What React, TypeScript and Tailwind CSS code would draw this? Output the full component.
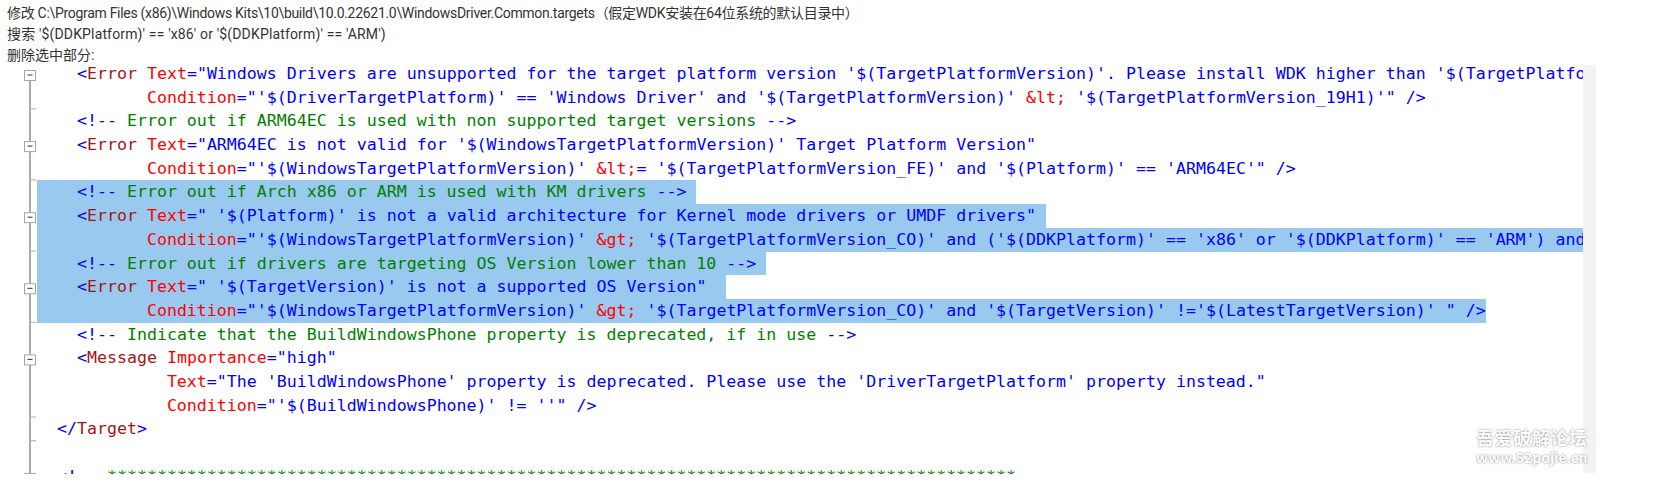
type Seg = [string, string];

const BLUE = 'text-[#0000ff]';
const MAROON = 'text-[#a31515]';
const RED = 'text-[#ff0000]';
const GREEN = 'text-[#008000]';

const sp = (n: number) => ' '.repeat(n);

const lines: string[] = [
  sp(4) + `<Error Text="Windows Drivers are unsupported for the target platform version '$(TargetPlatformVersion)'. Please install WDK higher than '$(TargetPlatformVersion_19H1)'."`,
  sp(11) + `Condition="'$(DriverTargetPlatform)' == 'Windows Driver' and '$(TargetPlatformVersion)' &lt; '$(TargetPlatformVersion_19H1)'" />`,
  sp(4) + `<!-- Error out if ARM64EC is used with non supported target versions -->`,
  sp(4) + `<Error Text="ARM64EC is not valid for '$(WindowsTargetPlatformVersion)' Target Platform Version"`,
  sp(11) + `Condition="'$(WindowsTargetPlatformVersion)' &lt;= '$(TargetPlatformVersion_FE)' and '$(Platform)' == 'ARM64EC'" />`,
  sp(4) + `<!-- Error out if Arch x86 or ARM is used with KM drivers -->`,
  sp(4) + `<Error Text=" '$(Platform)' is not a valid architecture for Kernel mode drivers or UMDF drivers"`,
  sp(11) + `Condition="'$(WindowsTargetPlatformVersion)' &gt; '$(TargetPlatformVersion_CO)' and ('$(DDKPlatform)' == 'x86' or '$(DDKPlatform)' == 'ARM') and '$(DriverType)' != ''" />`,
  sp(4) + `<!-- Error out if drivers are targeting OS Version lower than 10 -->`,
  sp(4) + `<Error Text=" '$(TargetVersion)' is not a supported OS Version" `,
  sp(11) + `Condition="'$(WindowsTargetPlatformVersion)' &gt; '$(TargetPlatformVersion_CO)' and '$(TargetVersion)' !='$(LatestTargetVersion)' " />`,
  sp(4) + `<!-- Indicate that the BuildWindowsPhone property is deprecated, if in use -->`,
  sp(4) + `<Message Importance="high"`,
  sp(13) + `Text="The 'BuildWindowsPhone' property is deprecated. Please use the 'DriverTargetPlatform' property instead."`,
  sp(13) + `Condition="'$(BuildWindowsPhone)' != ''" />`,
  sp(2) + `</Target>`,
  ``,
  sp(2) + `<!-- ` + '*'.repeat(91),
];

// simple xml colouring, VS style
function tokenize(line: string): Seg[] {
  const out: Seg[] = [];
  const m = line.match(/^(\s*)(.*)$/)!;
  const indent = m[1];
  const s = m[2];
  if (indent) out.push(['', indent]);
  if (s.startsWith('<!--')) {
    out.push([BLUE, '<!--']);
    let body = s.slice(4);
    let tail = '';
    if (body.endsWith('-->')) {
      tail = '-->';
      body = body.slice(0, -3);
    }
    out.push([GREEN, body]);
    if (tail) out.push([BLUE, tail]);
    return out;
  }
  let i = 0;
  while (i < s.length) {
    const ch = s[i];
    if (ch === '"') {
      const j = s.indexOf('"', i + 1);
      const end = j === -1 ? s.length : j + 1;
      s.slice(i, end)
        .split(/(&lt;|&gt;)/)
        .forEach((p) => p && out.push([p === '&lt;' || p === '&gt;' ? RED : BLUE, p]));
      i = end;
    } else if (ch === '<') {
      const open = s.slice(i).match(/^<\/?/)![0];
      out.push([BLUE, open]);
      i += open.length;
      const name = s.slice(i).match(/^[A-Za-z]+/)?.[0] ?? '';
      if (name) {
        out.push([MAROON, name]);
        i += name.length;
      }
    } else if (/[A-Za-z]/.test(ch)) {
      const name = s.slice(i).match(/^[A-Za-z]+/)![0];
      out.push([RED, name]);
      i += name.length;
    } else {
      out.push([BLUE, ch]);
      i++;
    }
  }
  return out;
}

const ROW = 23.7;
const foldBoxes = [0, 3, 6, 9, 12, 17];
const foldEnds = [1, 4, 7, 10, 14, 15];

function OutlineMargin() {
  return (
    <svg width="37" height="412" className="shrink-0">
      <rect x="29" y="18" width="2" height="394" fill="#ababab" />
      {foldEnds.map((r) => (
        <line key={r} x1="30" x2="36" y1={(r + 1) * ROW - 0.5} y2={(r + 1) * ROW - 0.5} stroke="#ababab" />
      ))}
      {foldBoxes.map((r) => (
        <g key={r}>
          <rect x="24.5" y={8.5 + r * ROW} width="11" height="10" fill="white" stroke="#a5a5a5" />
          <line x1="27.5" x2="32.5" y1={13 + r * ROW} y2={13 + r * ROW} stroke="#333" />
        </g>
      ))}
    </svg>
  );
}

export default function App() {
  return (
    <div className="relative w-[1662px] h-[491px] bg-white overflow-hidden">
      <div className="h-[62px] pt-[3px] pl-[7px] text-[14px] leading-[21px] text-[#333] font-['Roboto','Noto_Sans_CJK_SC',sans-serif]">
        <div className="tracking-[-0.3px]">修改 C:\Program Files (x86)\Windows Kits\10\build\10.0.22621.0\WindowsDriver.Common.targets（假定WDK安装在64位系统的默认目录中）</div>
        <div className="tracking-[0.15px]">搜索 '$(DDKPlatform)' == 'x86' or '$(DDKPlatform)' == 'ARM')</div>
        <div>删除选中部分:</div>
      </div>

      <div className="flex h-[412px] overflow-hidden">
        <OutlineMargin />
        <div className="w-[1546px] shrink-0 overflow-hidden font-['DejaVu_Sans_Mono',monospace] text-[16.6px]">
          {lines.map((line, i) => {
            const sel = i >= 5 && i <= 10;
            return (
              <div
                key={i}
                className={
                  sel
                    ? 'w-fit h-[23.7px] leading-[23.7px] whitespace-pre bg-[#99c9ef]'
                    : 'h-[23.7px] leading-[23.7px] whitespace-pre'
                }
              >
                {tokenize(line).map(([cls, text], k) => (
                  <span key={k} className={cls}>
                    {text}
                  </span>
                ))}
                {sel && i < 10 ? ' ' : ''}
              </div>
            );
          })}
        </div>
        <div className="w-[13px] mt-[3px] h-[408px] shrink-0 bg-[#f3f3f3]" />
      </div>

      {/* watermark */}
      <div className="absolute left-[1476px] top-[427px] flex flex-col items-center gap-[3px] text-white font-bold font-['Noto_Sans_CJK_SC',sans-serif] [text-shadow:0_0_2px_rgba(0,0,0,0.55)]">
        <div className="text-[18px] leading-[20px] tracking-[0.5px]">吾爱破解论坛</div>
        <div className="text-[14px] leading-[15px]">www.52pojie.cn</div>
      </div>
    </div>
  );
}
